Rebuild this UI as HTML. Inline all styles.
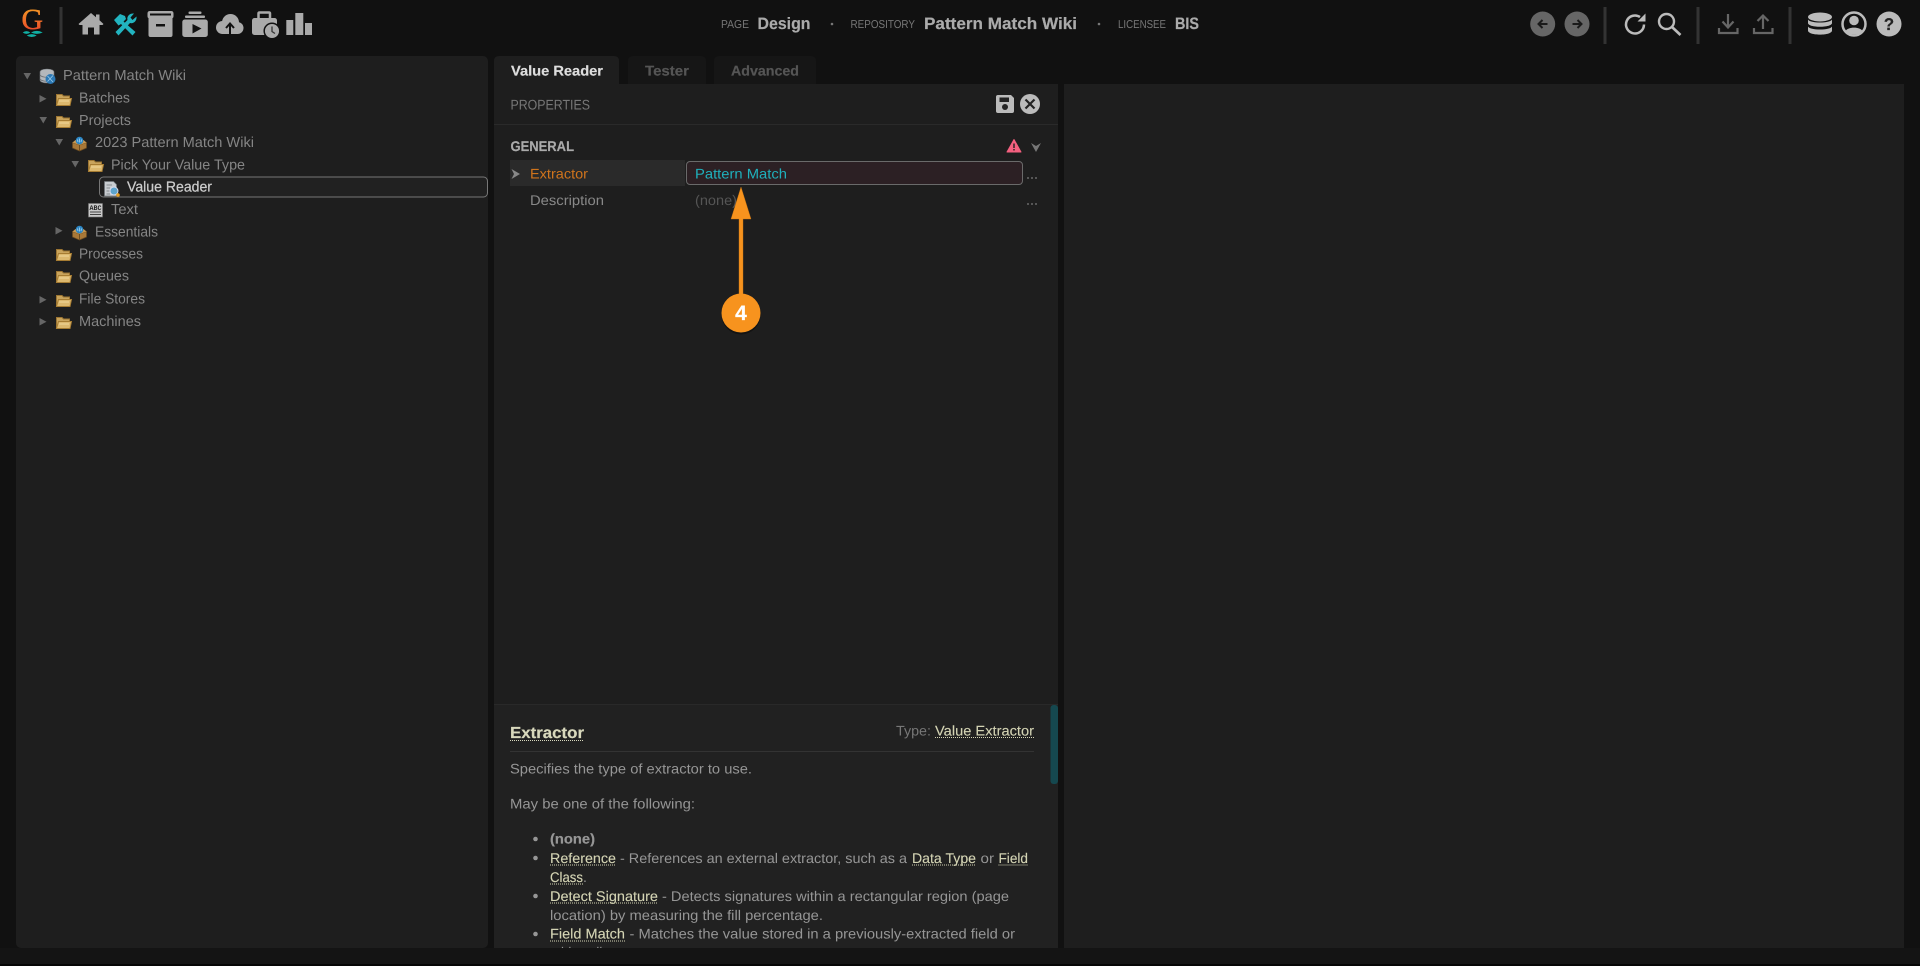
<!DOCTYPE html>
<html><head><meta charset="utf-8"><title>Pattern Match Wiki</title>
<style>
html,body{margin:0;padding:0;background:#111;width:1920px;height:966px;overflow:hidden}
svg{display:block;position:absolute;left:0;top:0}
text{font-family:"Liberation Sans",sans-serif;font-size:14px}
.t{fill:#858585;font-size:14.5px}
.d{fill:#969696;font-size:14px}
.l{fill:#d4d4b4;font-size:14px;stroke:#d4d4b4;stroke-width:.12}
.b{font-weight:bold;stroke:currentColor;stroke-width:.2}
</style></head><body>
<svg width="1920" height="966" viewBox="0 0 1920 966" xmlns="http://www.w3.org/2000/svg" text-rendering="geometricPrecision">
<defs>
<linearGradient id="g" x1="0" y1="0" x2="0" y2="1"><stop offset="0" stop-color="#f5a623"/><stop offset="1" stop-color="#e8382c"/></linearGradient>
<symbol id="folder" viewBox="0 0 16 13" width="16" height="13" overflow="visible">
<path d="M.5 12.5V1.5H6L7.5 3H13.5V5.5" fill="#c9a45c" stroke="#9c7532"/>
<path d="M.5 12.5L2.5 5.5H15.5L14 12.5Z" fill="#dcb86e" stroke="#a67c32"/>
<path d="M3 8H13" stroke="#f0d89c" stroke-width="1"/>
</symbol>
<symbol id="cube" viewBox="0 0 15 14" width="15" height="14" overflow="visible">
<path d="M.5 5.5L7.5 8L14.5 5.5V11L7.5 14L.5 11Z" fill="#a87838" stroke="#6c4c20" stroke-width=".7"/>
<path d="M.5 5.5L3.5 3H11.5L14.5 5.5L7.5 8Z" fill="#c89850"/>
<path d="M7.5 8V14" stroke="#6c4c20"/>
<circle cx="7.5" cy="3.6" r="3.8" fill="#2c86c4"/>
<path d="M5.5 2.500L6 5M7.500 1.500V5.500M9.500 2.500L9 5" stroke="#a8d4ee" stroke-width=".8"/>
</symbol>
</defs>

<rect width="1920" height="966" fill="#111"/>
<rect y="948" width="1920" height="16" fill="#141414"/>
<rect y="964" width="1920" height="2" fill="#060606"/>

<!-- top bar left -->
<text x="21.500" y="29" textLength="21.500" lengthAdjust="spacingAndGlyphs" style="font-family:'Liberation Serif',serif;font-size:29px;stroke:url(#g);stroke-width:.5" fill="url(#g)">G</text>
<path d="M22.700 32.500Q26.500 29.800 30.300 32.500Q26.500 35.200 22.700 32.500ZM31 32.500Q36.800 29.300 42.700 32.500Q36.800 35.200 31 32.500ZM26.700 35.500Q31.700 32.800 36.700 35.500Q31.700 38.600 26.700 35.500Z" fill="#10b0a4"/>
<rect x="59.500" y="7" width="3" height="37" fill="#333"/>

<path fill="#aaa" d="M91 13L96 17.300V14.500H99.500V20.300L103.500 24L102.500 25H99.500V34.500H94V27.500H88V34.500H82.500V25H79.500L78.500 24Z"/>

<g fill="#22b4c0" stroke="none">
<path d="M114 20L120 14L125 16L126 19L123.500 21.500L135.500 32L132.500 35.500L121 24L118.500 25.500Z"/>
<path d="M115.500 32L127.500 20C126.500 16.500 129.500 13 134 13.500L130.500 17.500L132.500 20L136.500 16.500C137 21 133.500 24 130 23L118.500 35.500Z"/>
</g>

<path fill="#aaa" fill-rule="evenodd" d="M150 11H171Q173.500 11 173.500 13.500V16Q173.500 18 172.500 18V35Q172.500 37 170.500 37H150.500Q148.500 37 148.500 35V18Q147.500 18 147.500 16V13.500Q147.500 11 150 11ZM150 13.500V15.500H171V13.500ZM156 24V26.500H165V24Z"/>

<g fill="#aaa">
<rect x="188.500" y="11.500" width="13" height="2.500" rx="1"/>
<rect x="185" y="15.500" width="20" height="2.500" rx="1"/>
<rect x="182.300" y="19.500" width="25.500" height="17.500" rx="2.500"/>
</g>
<path d="M192.500 24V33.500L201.500 28.500Z" fill="#111"/>

<g fill="#aaa">
<circle cx="222.500" cy="27.500" r="6.500"/><circle cx="230.500" cy="22.500" r="8.500"/><circle cx="237.500" cy="28" r="6"/>
<rect x="222" y="26" width="16" height="8"/>
</g>
<path d="M230 34.500V24M226 28L230 23.500L234 28" fill="none" stroke="#111" stroke-width="2"/>

<g>
<rect x="252" y="18" width="25" height="17" rx="2.500" fill="#aaa"/>
<path d="M258.500 18V13.500Q258.500 12.500 259.500 12.500H269Q270 12.500 270 13.500V18" fill="none" stroke="#aaa" stroke-width="2.500"/>
<circle cx="272" cy="31" r="7.800" fill="#aaa" stroke="#111" stroke-width="1.500"/>
<path d="M272 26.500V31.500L275 33.500" fill="none" stroke="#333" stroke-width="1.300"/>
</g>

<g fill="#aaa"><rect x="286.300" y="20" width="7" height="15"/><rect x="295.300" y="13" width="8" height="22"/><rect x="305" y="23" width="7" height="12"/></g>

<!-- top bar center -->
<text x="721" y="28" textLength="28" lengthAdjust="spacingAndGlyphs" fill="#777" style="font-size:11.500px">PAGE</text>
<text x="757.500" y="29" textLength="53" lengthAdjust="spacingAndGlyphs" class="b" fill="#aaa" color="#aaa" style="font-size:16.500px">Design</text>
<circle cx="832" cy="24" r="1.300" fill="#777"/>
<text x="850.500" y="28" textLength="64.500" lengthAdjust="spacingAndGlyphs" fill="#777" style="font-size:11.500px">REPOSITORY</text>
<text x="924" y="29" textLength="153" lengthAdjust="spacingAndGlyphs" class="b" fill="#aaa" color="#aaa" style="font-size:16.500px">Pattern Match Wiki</text>
<circle cx="1099" cy="24" r="1.300" fill="#777"/>
<text x="1118" y="28" textLength="48" lengthAdjust="spacingAndGlyphs" fill="#777" style="font-size:11.500px">LICENSEE</text>
<text x="1175" y="29" textLength="24" lengthAdjust="spacingAndGlyphs" class="b" fill="#aaa" color="#aaa" style="font-size:16.500px">BIS</text>

<!-- top bar right -->
<circle cx="1542.700" cy="24" r="12.500" fill="#666"/>
<path d="M1547.500 24H1538.500M1542.500 20L1538.500 24L1542.500 28" fill="none" stroke="#1a1a1a" stroke-width="2"/>
<circle cx="1577" cy="24" r="12.500" fill="#666"/>
<path d="M1572.500 24H1581.500M1577.500 20L1581.500 24L1577.500 28" fill="none" stroke="#1a1a1a" stroke-width="2"/>
<rect x="1603.500" y="7" width="3" height="37" fill="#333"/>
<path d="M1644 24.500A9 9 0 1 1 1640 17" fill="none" stroke="#bbb" stroke-width="2.500"/>
<path d="M1645.500 13.500V21.500H1637.500Z" fill="#bbb"/>
<circle cx="1666.500" cy="21.500" r="7.500" fill="none" stroke="#bbb" stroke-width="2.400"/>
<path d="M1672 27L1680.500 35" stroke="#bbb" stroke-width="2.600"/>
<rect x="1696.500" y="7" width="3" height="37" fill="#333"/>
<path d="M1728 14V27M1722.500 21.500L1728 27.500L1733.500 21.500M1719 28V33H1737.500V28" fill="none" stroke="#666" stroke-width="2.200"/>
<path d="M1763 16V29M1757.500 21L1763 15.500L1768.500 21M1754 28V33H1772.500V28" fill="none" stroke="#666" stroke-width="2.200"/>
<rect x="1788.500" y="7" width="3" height="37" fill="#333"/>
<g fill="#bbb">
<ellipse cx="1820" cy="17" rx="12" ry="4.500"/>
<path d="M1808 19.500C1810 23.500 1830 23.500 1832 19.500V23C1832 28 1808 28 1808 23Z"/>
<path d="M1808 26.500C1810 30.500 1830 30.500 1832 26.500V30.500C1832 36 1808 36 1808 30.500Z"/>
</g>
<circle cx="1854" cy="24" r="11.500" fill="none" stroke="#bbb" stroke-width="2.500"/>
<circle cx="1854" cy="20.500" r="4.800" fill="#bbb"/>
<path d="M1845.500 31C1848 26.500 1860 26.500 1862.500 31C1860 35.500 1848 35.500 1845.500 31Z" fill="#bbb"/>
<circle cx="1889" cy="24" r="12.500" fill="#bbb"/>
<text x="1889" y="30" text-anchor="middle" class="b" fill="#222" color="#222" style="font-size:17px">?</text>

<!-- panels -->
<rect x="16" y="56" width="472" height="892" rx="5" fill="#1e1e1e"/>
<path d="M494 84H1058V948H494Z" fill="#1e1e1e"/>
<rect x="494" y="704" width="564" height="244" fill="#212121"/>
<rect x="494" y="704" width="564" height="1" fill="#292929"/>
<rect x="1064" y="84" width="840" height="864" fill="#1e1e1e"/>

<!-- tabs -->
<path d="M494 84V61Q494 56 499 56H614Q619 56 619 61V84Z" fill="#1e1e1e"/>
<path d="M628 84V61Q628 56 633 56H701Q706 56 706 61V84Z" fill="#161616"/>
<path d="M714 84V61Q714 56 719 56H811Q816 56 816 61V84Z" fill="#161616"/>
<text x="511" y="75.500" textLength="92" lengthAdjust="spacingAndGlyphs" class="b" fill="#ddd" color="#ddd">Value Reader</text>
<text x="645" y="75.500" textLength="44" lengthAdjust="spacingAndGlyphs" class="b" fill="#555" color="#555">Tester</text>
<text x="731" y="75.500" textLength="68" lengthAdjust="spacingAndGlyphs" class="b" fill="#555" color="#555">Advanced</text>

<!-- properties header -->
<text x="510.500" y="109.500" textLength="79.500" lengthAdjust="spacingAndGlyphs" fill="#777">PROPERTIES</text>
<rect x="494" y="124" width="564" height="1" fill="#2a2a2a"/>
<path d="M998 95H1011L1014 98V111Q1014 113 1012 113H998Q996 113 996 111V97Q996 95 998 95Z" fill="#bbb"/>
<rect x="999.500" y="97.500" width="9.500" height="4.500" fill="#222"/>
<circle cx="1005" cy="107" r="3" fill="#222"/>
<circle cx="1030" cy="104" r="10" fill="#bbb"/>
<path d="M1025.500 99.500L1034.500 108.500M1034.500 99.500L1025.500 108.500" stroke="#222" stroke-width="2.200"/>

<!-- general -->
<text x="510.500" y="151" textLength="63.500" lengthAdjust="spacingAndGlyphs" class="b" fill="#aaa" color="#aaa">GENERAL</text>
<path d="M1014 139.500L1021 152H1007Z" fill="#f4607f" stroke="#f4607f" stroke-linejoin="round"/>
<path d="M1014 143.500V148M1014 149V150.500" stroke="#1e1e1e" stroke-width="1.400"/>
<path d="M1031 143L1036 146L1041 143L1036 152Z" fill="#777"/>

<rect x="510" y="160" width="175" height="26" fill="#2a2a2a"/>
<path d="M511.500 169L520 174L511.500 179L514 174Z" fill="#888"/>
<text x="530" y="178.500" textLength="58" lengthAdjust="spacingAndGlyphs" fill="#d0741c">Extractor</text>
<rect x="686.500" y="161.500" width="336" height="23" rx="3.500" fill="#2c2024" stroke="#6a6a6a"/>
<text x="695" y="178.500" textLength="92" lengthAdjust="spacingAndGlyphs" fill="#1fb0bc">Pattern Match</text>
<text x="530" y="205" textLength="74" lengthAdjust="spacingAndGlyphs" fill="#888">Description</text>
<text x="695" y="205" textLength="42" lengthAdjust="spacingAndGlyphs" fill="#555">(none)</text>
<path d="M1027 178H1037M1027 204H1037" stroke="#777" stroke-width="1.200" stroke-dasharray="2 2"/>

<!-- tree -->
<g fill="#666">
<path d="M23.500 73H31L27.250 79.500Z"/>
<path d="M39.500 95V102.500L46.500 98.750Z"/>
<path d="M39.500 117H47L43.250 123.500Z"/>
<path d="M55.500 139H63L59.250 145.500Z"/>
<path d="M71.500 161H79L75.250 167.500Z"/>
<path d="M55.500 227V234.500L62.500 230.750Z"/>
<path d="M39.500 296V303.500L46.500 299.750Z"/>
<path d="M39.500 318V325.500L46.500 321.750Z"/>
</g>
<rect x="99.500" y="177" width="388" height="20" rx="4" fill="#212121" stroke="#777"/>

<!-- tree root icon -->
<path d="M40 72C40 68 54 68 54 72V80C54 84 40 84 40 80Z" fill="#b4b8bc" stroke="#6d7175" stroke-width=".6"/>
<path d="M40 75C42 78 52 78 54 75M40 79C42 82 52 82 54 79" stroke="#6d7175" fill="none" stroke-width=".8"/>
<circle cx="50.500" cy="79" r="5" fill="#2c78b4"/>
<path d="M47.500 76L53 82M53 75.500L47.500 81.500" stroke="#9acae8" stroke-width=".8"/>

<use href="#folder" x="56" y="93"/>
<use href="#folder" x="56" y="115"/>
<use href="#cube" x="72" y="137"/>
<use href="#folder" x="88" y="159"/>
<use href="#cube" x="72" y="226"/>
<use href="#folder" x="56" y="248"/>
<use href="#folder" x="56" y="270"/>
<use href="#folder" x="56" y="294"/>
<use href="#folder" x="56" y="316"/>

<!-- doc icon -->
<path d="M104.500 181.500H113.500L116.500 184.500V196H104.500Z" fill="#c8ccd0" stroke="#70757a" stroke-width=".7"/>
<path d="M106.500 185H112M106.500 188H110M106.500 191H110M106.500 194H110" stroke="#70757a" stroke-width=".8"/>
<circle cx="114" cy="191" r="4" fill="#5ea4cc" stroke="#dde" stroke-width=".9"/>
<circle cx="118" cy="195" r="1.800" fill="#e8a020"/>

<!-- abc icon -->
<rect x="88.500" y="203.500" width="14" height="13.500" fill="#c8c8c8" stroke="#777" stroke-width=".6"/>
<text x="89.500" y="210" textLength="12" lengthAdjust="spacingAndGlyphs" style="font-family:'Liberation Mono',monospace;font-size:7px;font-weight:bold" fill="#222">ABC</text>
<path d="M90 212H101M90 214.500H101" stroke="#444" stroke-width="1"/>

<text class="t" x="63" y="80" textLength="123" lengthAdjust="spacingAndGlyphs">Pattern Match Wiki</text>
<text class="t" x="79" y="102.500" textLength="51" lengthAdjust="spacingAndGlyphs">Batches</text>
<text class="t" x="79" y="125" textLength="52" lengthAdjust="spacingAndGlyphs">Projects</text>
<text class="t" x="95" y="147" textLength="159" lengthAdjust="spacingAndGlyphs">2023 Pattern Match Wiki</text>
<text class="t" x="111" y="169.500" textLength="134" lengthAdjust="spacingAndGlyphs">Pick Your Value Type</text>
<text x="127" y="191.500" textLength="85" lengthAdjust="spacingAndGlyphs" fill="#ccc" style="font-size:14.500px;stroke:#ccc;stroke-width:.25">Value Reader</text>
<text class="t" x="111" y="214" textLength="27" lengthAdjust="spacingAndGlyphs">Text</text>
<text class="t" x="95" y="236.500" textLength="63" lengthAdjust="spacingAndGlyphs">Essentials</text>
<text class="t" x="79" y="258.500" textLength="64" lengthAdjust="spacingAndGlyphs">Processes</text>
<text class="t" x="79" y="280.500" textLength="50" lengthAdjust="spacingAndGlyphs">Queues</text>
<text class="t" x="79" y="303.500" textLength="66" lengthAdjust="spacingAndGlyphs">File Stores</text>
<text class="t" x="79" y="326" textLength="62" lengthAdjust="spacingAndGlyphs">Machines</text>

<!-- help -->
<svg x="494" y="704" width="564" height="244" viewBox="494 704 564 244" overflow="hidden">
<text x="510" y="738" textLength="74" lengthAdjust="spacingAndGlyphs" class="b" fill="#d8d8bc" color="#d8d8bc" style="font-size:16px">Extractor</text>
<line x1="510" y1="740.500" x2="584" y2="740.500" stroke="#d8d8bc" stroke-dasharray="1 1"/>
<text x="896" y="735.500" textLength="35" lengthAdjust="spacingAndGlyphs" fill="#777">Type:</text>
<text class="l" x="935" y="735.500" textLength="99" lengthAdjust="spacingAndGlyphs">Value Extractor</text>
<line x1="935" y1="737.500" x2="1034" y2="737.500" stroke="#d4d4b4" stroke-dasharray="1 1"/>
<rect x="510" y="751" width="524" height="1" fill="#333"/>
<text class="d" x="510" y="773.500" textLength="242" lengthAdjust="spacingAndGlyphs">Specifies the type of extractor to use.</text>
<text class="d" x="510" y="808.500" textLength="185" lengthAdjust="spacingAndGlyphs">May be one of the following:</text>
<g fill="#969696"><circle cx="535.500" cy="839" r="2.300"/><circle cx="535.500" cy="858" r="2.300"/><circle cx="535.500" cy="896" r="2.300"/><circle cx="535.500" cy="934" r="2.300"/></g>
<text class="d b" x="550" y="843.500" textLength="45" lengthAdjust="spacingAndGlyphs" color="#969696">(none)</text>
<text class="l" x="550" y="863" textLength="66" lengthAdjust="spacingAndGlyphs">Reference</text>
<text class="d" x="620" y="863" textLength="287" lengthAdjust="spacingAndGlyphs">- References an external extractor, such as a</text>
<text class="l" x="912" y="863" textLength="64" lengthAdjust="spacingAndGlyphs">Data Type</text>
<text class="d" x="980.500" y="863" textLength="13.500" lengthAdjust="spacingAndGlyphs">or</text>
<text class="l" x="998.500" y="863" textLength="29.500" lengthAdjust="spacingAndGlyphs">Field</text>
<text class="l" x="550" y="882" textLength="33" lengthAdjust="spacingAndGlyphs">Class</text>
<text class="d" x="583" y="882">.</text>
<text class="l" x="550" y="901" textLength="108" lengthAdjust="spacingAndGlyphs">Detect Signature</text>
<text class="d" x="662" y="901" textLength="347" lengthAdjust="spacingAndGlyphs">- Detects signatures within a rectangular region (page</text>
<text class="d" x="550" y="920" textLength="273" lengthAdjust="spacingAndGlyphs">location) by measuring the fill percentage.</text>
<text class="l" x="550" y="938.500" textLength="75" lengthAdjust="spacingAndGlyphs">Field Match</text>
<text class="d" x="629.500" y="938.500" textLength="385.500" lengthAdjust="spacingAndGlyphs">- Matches the value stored in a previously-extracted field or</text>
<text class="d" x="550" y="957" textLength="56" lengthAdjust="spacingAndGlyphs">table cell.</text>
<g stroke="#d4d4b4" stroke-dasharray="1 1">
<line x1="550" y1="865" x2="616" y2="865"/><line x1="912" y1="865" x2="976" y2="865"/><line x1="998.500" y1="865" x2="1028" y2="865"/>
<line x1="550" y1="884" x2="583" y2="884"/><line x1="550" y1="903" x2="658" y2="903"/><line x1="550" y1="941" x2="625" y2="941"/>
</g>
<rect x="1050.500" y="705" width="7.500" height="79" rx="3" fill="#15484f"/>
</svg>

<!-- annotation -->
<path d="M741 187L751 219H743V296H739V219H731Z" fill="#f7931e" stroke="#c87410" stroke-width=".4"/>
<circle cx="741" cy="315" r="19.500" fill="#000" opacity=".35"/>
<circle cx="741" cy="313" r="19.500" fill="#f7931e"/>
<text x="741" y="320" text-anchor="middle" class="b" fill="#fff" color="#fff" style="font-size:21px">4</text>
</svg>
</body></html>
